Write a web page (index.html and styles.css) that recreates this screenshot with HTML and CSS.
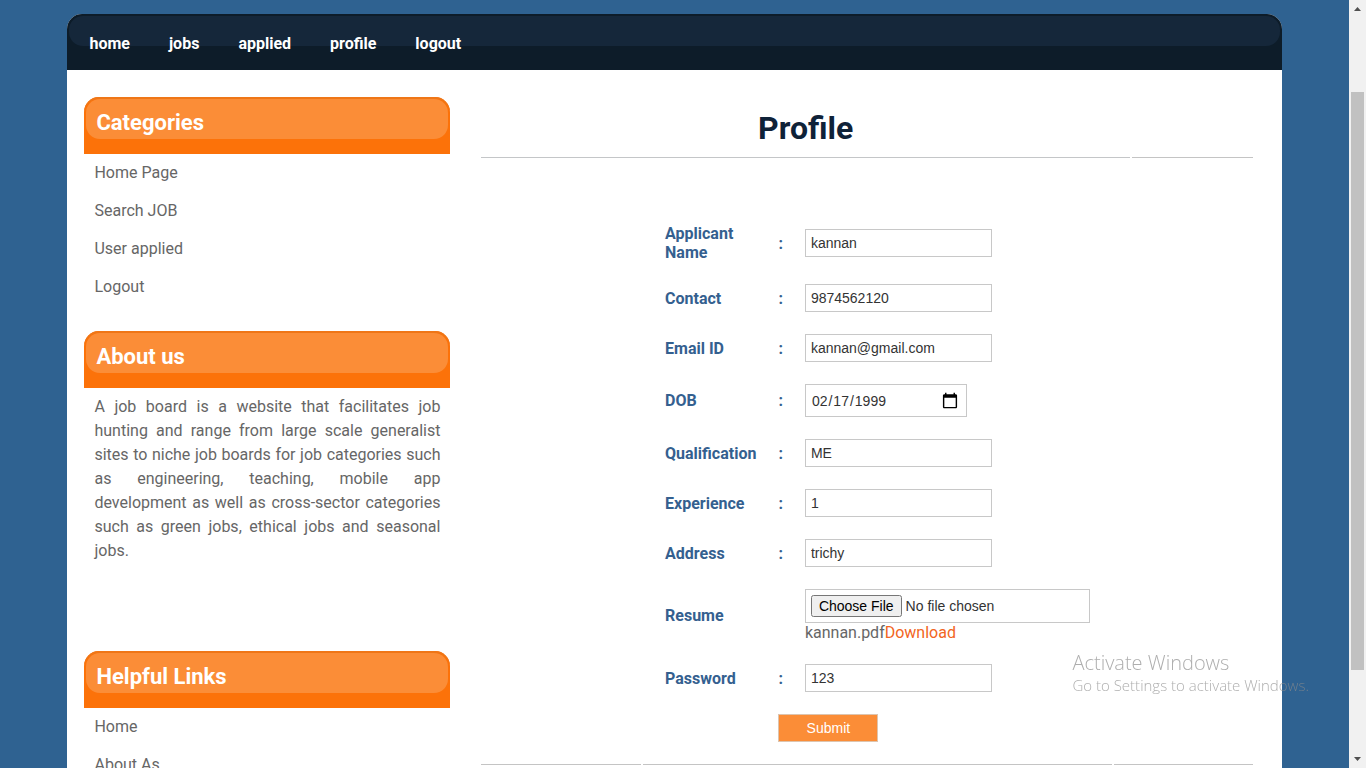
FILE: index.html
```html
<!DOCTYPE html>
<html lang="en">
<head>
<meta charset="utf-8">
<title>Profile</title>
<link rel="stylesheet" href="styles.css">
</head>
<body>
<div class="window">
  <div class="viewport">
    <div class="page">
      <nav class="menu">
        <a href="#">home</a>
        <a href="#">jobs</a>
        <a href="#">applied</a>
        <a href="#">profile</a>
        <a href="#">logout</a>
      </nav>
      <div class="columns">
        <aside class="sidebar">
          <section class="box">
            <h2 class="box-title">Categories</h2>
            <ul class="links">
              <li><a href="#">Home Page</a></li>
              <li><a href="#">Search JOB</a></li>
              <li><a href="#">User applied</a></li>
              <li><a href="#">Logout</a></li>
            </ul>
          </section>
          <section class="box box-about">
            <h2 class="box-title">About us</h2>
            <p class="about">A job board is a website that facilitates job hunting and range from large scale generalist sites to niche job boards for job categories such as engineering, teaching, mobile app development as well as cross-sector categories such as green jobs, ethical jobs and seasonal jobs.</p>
          </section>
          <section class="box">
            <h2 class="box-title">Helpful Links</h2>
            <ul class="links">
              <li><a href="#">Home</a></li>
              <li><a href="#">About As</a></li>
            </ul>
          </section>
        </aside>
        <main class="main">
          <div class="title-row">
            <h1 class="title">Profile</h1>
            <div class="rule"></div>
          </div>
          <div class="form-row">
            <div class="rule"></div>
            <form class="rule">
              <table class="fields">
                <tr><th><label for="name">Applicant Name</label></th><th>:</th><td><input class="text" id="name" type="text" value="kannan"></td></tr>
                <tr><th><label for="contact">Contact</label></th><th>:</th><td><input class="text" id="contact" type="text" value="9874562120"></td></tr>
                <tr><th><label for="email">Email ID</label></th><th>:</th><td><input class="text" id="email" type="text" value="kannan@gmail.com"></td></tr>
                <tr><th><label for="dob">DOB</label></th><th>:</th><td><input class="date" id="dob" type="date" value="1999-02-17"></td></tr>
                <tr><th><label for="qualification">Qualification</label></th><th>:</th><td><input class="text" id="qualification" type="text" value="ME"></td></tr>
                <tr><th><label for="experience">Experience</label></th><th>:</th><td><input class="text" id="experience" type="text" value="1"></td></tr>
                <tr><th><label for="address">Address</label></th><th>:</th><td><input class="text" id="address" type="text" value="trichy"></td></tr>
                <tr><th><label for="resume">Resume</label></th><th></th><td><input class="file" id="resume" type="file"><span class="resume">kannan.pdf<a href="#">Download</a></span></td></tr>
                <tr><th><label for="password">Password</label></th><th>:</th><td><input class="text" id="password" type="text" value="123"></td></tr>
                <tr><th></th><td colspan="2"><button class="submit" type="submit">Submit</button></td></tr>
              </table>
            </form>
            <div class="rule"></div>
          </div>
        </main>
      </div>
    </div>
  </div>
  <div class="scrollbar">
    <svg class="arrow" viewBox="0 0 17 17"><path d="M5 11 8.500 7 12 11z"/></svg>
    <div class="track"><div class="thumb"></div></div>
    <svg class="arrow" viewBox="0 0 17 17"><path d="M5 6 8.500 10 12 6z"/></svg>
  </div>
</div>
<div class="notice">
  <div class="notice-title">Activate Windows</div>
  <div class="notice-text">Go to Settings to activate Windows.</div>
</div>
</body>
</html>
```
FILE: styles.css
```css
* { box-sizing: border-box; }
body {
  margin: 0;
  background: #2f6291;
  color: #666;
  font: 16px/24px Roboto, sans-serif;
}
a { color: inherit; text-decoration: none; }
h1, h2, p, ul { margin: 0; padding: 0; }
ul { list-style: none; }

.window { display: flex; height: 100vh; overflow: hidden; }
.viewport { flex: 1; overflow: hidden; padding-top: 14px; }
.page {
  width: 90%;
  min-height: 100%;
  margin: 0 auto;
  background: #fff;
  border-radius: 15px 15px 0 0;
}

.menu {
  display: flex;
  gap: 39px;
  padding: 18px 22px 14px;
  border-radius: 15px 15px 0 0;
  background: #0d1c29;
  color: #fff;
  font-weight: 700;
  position: relative;
}
.menu::before, .box-title::before {
  content: "";
  position: absolute;
  inset: 2px 2px 24px;
  border-radius: 14px;
  background: #15273a;
}
.menu a { position: relative; }

.columns {
  display: grid;
  grid-template-columns: 366px minmax(0, 1fr);
  gap: 31px;
  padding: 27px 29px 0 17px;
}

.box { margin-bottom: 32px; }
.box-about { margin-bottom: 88px; }
.box-title {
  position: relative;
  isolation: isolate;
  padding: 14px 12px 19px;
  border-radius: 15px 15px 0 0;
  background: #fc7209;
  box-shadow: inset 0 2px #ef7617;
  color: #fff;
  font-size: 22px;
  line-height: 24px;
}
.box-title::before {
  z-index: -1;
  inset: 2px 2px 15px;
  background: #fb8d37;
}
.links { display: grid; gap: 14px; padding: 7px 10px 0; }
.about { padding: 7px 10px 0; text-align: justify; }

.title-row {
  display: grid;
  grid-template-columns: 650fr 121fr;
  gap: 2px;
}
.title {
  padding: 11px 0 9px;
  border-bottom: 1px solid #c4c6c8;
  color: #0f2238;
  font-size: 32px;
  line-height: 40px;
  text-align: center;
}
.rule { border-bottom: 1px solid #c4c4c4; }
.form-row {
  display: grid;
  grid-template-columns: 160fr auto 139fr;
  gap: 2px;
  padding-top: 44px;
}
.fields {
  border-collapse: separate;
  border-spacing: 22px;
  line-height: 19px;
}
.fields th, .fields td { padding: 0; text-align: left; vertical-align: middle; }
.fields th { color: #34608f; }
.fields th:first-child { width: 91px; }

input, button { font: 14px "Liberation Sans", Arial, sans-serif; }
.text, .date, .file {
  display: block;
  border: 1px solid #c8c8c8;
  background: #fff;
  color: #333;
}
.text { width: 187px; height: 28px; padding: 5px; }
.date { width: 162px; height: 33px; padding: 5px; }
.date::-webkit-calendar-picker-indicator { width: 18px; height: 18px; padding: 0; margin-right: 2px; }
.file { width: 285px; height: 34px; padding: 5px; }
.resume { display: block; }
.resume a { color: #f26522; }
.submit {
  display: block;
  width: 100px;
  height: 28px;
  border: 1px solid #ddc4ae;
  background: #fb8d37;
  color: #fff;
}

.scrollbar { display: flex; flex-direction: column; width: 17px; background: #f1f1f1; }
.arrow { height: 17px; fill: #505050; }
.track { flex: 1; padding: 75px 2px 0; }
.thumb { height: 88%; max-height: 578px; background: #c1c1c1; }

.notice {
  position: fixed;
  right: 57px;
  bottom: 73px;
  color: rgba(140, 140, 140, .7);
  font-family: "Open Sans", sans-serif;
  font-weight: 300;
  pointer-events: none;
}
.notice-title { font-size: 20px; }
.notice-text { font-size: 15px; line-height: 20px; }
```
